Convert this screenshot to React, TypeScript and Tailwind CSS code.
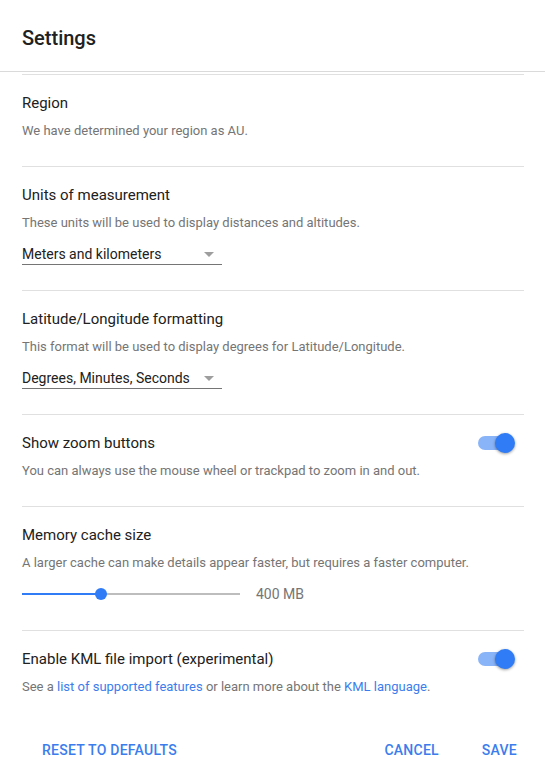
import { ReactNode } from 'react';

/* =========================
   PIEZAS
========================= */
function Section({ children, last }: { children: ReactNode; last?: boolean }) {
  return (
    <section className={`border-t border-[#e0e0e0] pt-[17px] ${last ? 'pb-0' : 'pb-[26px]'}`}>
      {children}
    </section>
  );
}

function Title({ children }: { children: ReactNode }) {
  return <h3 className="text-[15px] leading-[22px] text-[#212121]">{children}</h3>;
}

function Desc({ children }: { children: ReactNode }) {
  return <p className="mt-[8px] text-[13px] leading-[18px] text-[#757575]">{children}</p>;
}

function Select({ value }: { value: string }) {
  return (
    <div className="mt-[12px] mb-[-1px] w-[200px] flex items-center justify-between border-b border-[#757575] h-[21px] pr-[8px]">
      <span className="text-[14px] leading-[20px] text-[#212121]">{value}</span>
      <span className="w-0 h-0 border-l-[5px] border-r-[5px] border-t-[5px] border-l-transparent border-r-transparent border-t-[#9e9e9e]" />
    </div>
  );
}

function Toggle() {
  return (
    <div className="relative w-[37px] h-[20px] flex items-center">
      <div className="w-[34px] h-[14px] rounded-full bg-[#8ab4f8]" />
      <div className="absolute right-0 top-0 w-[20px] h-[20px] rounded-full bg-[#2f7cf6] shadow-[0_1px_3px_rgba(0,0,0,0.4)]" />
    </div>
  );
}

/* =========================
   APP
========================= */
export default function App() {
  return (
    <div
      className="w-[545px] h-[774px] flex flex-col bg-white overflow-hidden"
      style={{ fontFamily: 'Roboto, "Liberation Sans", sans-serif' }}
    >
      {/* HEADER */}
      <header className="h-[72px] flex-shrink-0 flex items-center px-[22px] border-b border-[#dadada]">
        <h2 className="text-[20px] font-medium text-[#212121] mt-[4px]">Settings</h2>
      </header>

      {/* CONTENT */}
      <div className="flex-1 overflow-hidden pt-[2px] pl-[22px] pr-[21px]">
        <Section>
          <Title>Region</Title>
          <Desc>We have determined your region as AU.</Desc>
        </Section>

        <Section>
          <Title>Units of measurement</Title>
          <Desc>These units will be used to display distances and altitudes.</Desc>
          <Select value="Meters and kilometers" />
        </Section>

        <Section>
          <Title>Latitude/Longitude formatting</Title>
          <Desc>This format will be used to display degrees for Latitude/Longitude.</Desc>
          <Select value="Degrees, Minutes, Seconds" />
        </Section>

        <Section>
          <div className="flex items-center justify-between pr-[9px]">
            <Title>Show zoom buttons</Title>
            <Toggle />
          </div>
          <Desc>You can always use the mouse wheel or trackpad to zoom in and out.</Desc>
        </Section>

        <Section>
          <Title>Memory cache size</Title>
          <Desc>A larger cache can make details appear faster, but requires a faster computer.</Desc>
          <div className="mt-[12px] h-[20px] flex items-center">
            <div className="relative w-[218px] h-[2px] bg-[#bdbdbd]">
              <div className="absolute left-0 top-0 h-[2px] w-[79px] bg-[#2f7cf6]" />
              <div className="absolute left-[73px] top-[-5px] w-[12px] h-[12px] rounded-full bg-[#2f7cf6]" />
            </div>
            <span className="ml-[16px] text-[14px] text-[#757575]">400 MB</span>
          </div>
        </Section>

        <Section last>
          <div className="flex items-center justify-between pr-[9px]">
            <Title>Enable KML file import (experimental)</Title>
            <Toggle />
          </div>
          <Desc>
            See a <span className="text-[#3b7ded]">list of supported features</span> or learn more
            about the <span className="text-[#3b7ded]">KML language</span>.
          </Desc>
        </Section>
      </div>

      {/* FOOTER */}
      <footer className="h-[48px] flex-shrink-0 flex items-center justify-between pl-[26px] pr-[12px]">
        <button className="px-4 text-[14px] font-medium tracking-[0.25px] text-[#3b7ded]">
          RESET TO DEFAULTS
        </button>
        <div className="flex gap-[11px]">
          <button className="px-4 text-[14px] font-medium tracking-[0.25px] text-[#3b7ded]">CANCEL</button>
          <button className="px-4 text-[14px] font-medium tracking-[0.25px] text-[#3b7ded]">SAVE</button>
        </div>
      </footer>
    </div>
  );
}
